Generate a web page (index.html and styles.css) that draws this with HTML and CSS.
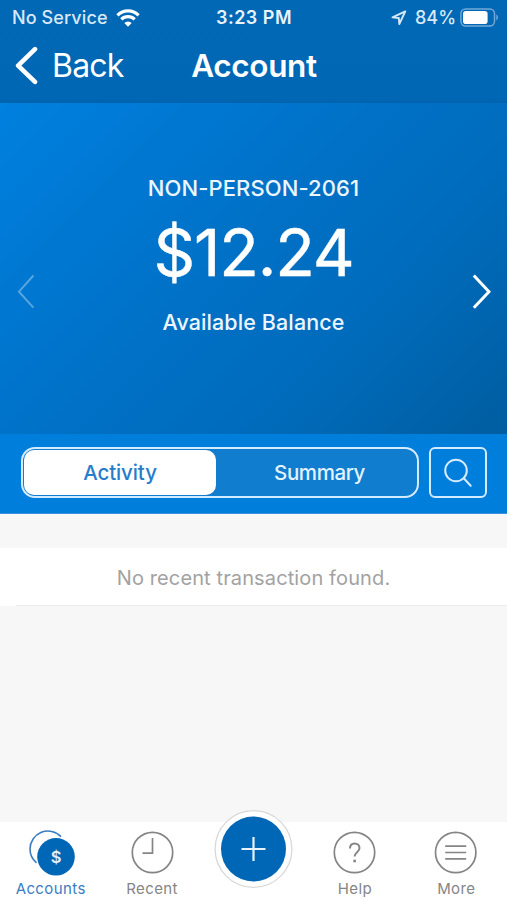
FILE: index.html
```html
<!DOCTYPE html>
<html lang="en">
<head>
<meta charset="utf-8">
<title>Account</title>
<link rel="stylesheet" href="styles.css">
</head>
<body>
<div class="app">
  <header class="top">
    <div class="status">
      <div class="status-left">
        <span class="carrier">No Service</span>
        <svg class="wifi" width="24" height="18" viewBox="0 0 24 18" fill="none" stroke="#fff" stroke-width="3.1"><path d="M1.4 6.3a15 15 0 0 1 21.2 0"/><path d="M5.3 10.4a9.5 9.5 0 0 1 13.4 0"/><path d="M12 17.7 8.3 14a5.2 5.2 0 0 1 7.4 0z" fill="#fff" stroke="none"/></svg>
      </div>
      <span class="time">3:23 PM</span>
      <div class="status-right">
        <svg class="locate" width="16" height="16" viewBox="0 0 16 16" fill="none" stroke="#d9e8f6" stroke-width="1.9" stroke-linejoin="round"><path d="M14.3 1.4 1.5 7.4l6.3.6.5 6z"/></svg>
        <span class="percent">84%</span>
        <svg class="battery" width="39" height="19" viewBox="0 0 39 19"><rect x=".9" y=".9" width="33.6" height="17.2" rx="4.8" fill="none" stroke="#73a9d7" stroke-width="1.5"/><rect x="3" y="3" width="24.6" height="13" rx="2.8" fill="#fff"/><path d="M36.3 6.6c2.2.8 2.2 5 0 5.8z" fill="#73a9d7"/></svg>
      </div>
    </div>
    <div class="nav">
      <div class="back">
        <svg width="26" height="40" viewBox="0 0 26 40" fill="none" stroke="#fff" stroke-width="4.6" stroke-linecap="round" stroke-linejoin="round"><path d="M22 4.2 5.1 20.6 22 36.8"/></svg>
        <span class="back-label">Back</span>
      </div>
      <h1 class="title">Account</h1>
    </div>
  </header>
  <section class="hero">
    <svg class="prev" width="20" height="38" viewBox="0 0 20 38" fill="none" stroke="#fff" stroke-width="2"><path d="M17.4 2.5 3 18.7l14.4 16"/></svg>
    <div class="balance">
      <div class="name">NON-PERSON-2061</div>
      <div class="amount">$12.24</div>
      <div class="caption">Available Balance</div>
    </div>
    <svg class="next" width="20" height="38" viewBox="0 0 20 38" fill="none" stroke="#fff" stroke-width="3"><path d="M2.8 2.5 18 18.7 2.8 34.8"/></svg>
  </section>
  <section class="controls">
    <div class="segments">
      <div class="segment active">Activity</div>
      <div class="segment summary">Summary</div>
    </div>
    <div class="search">
      <svg width="32" height="32" viewBox="0 0 32 32" fill="none" stroke="#d7ebff" stroke-width="2" stroke-linecap="round"><circle cx="14" cy="13.5" r="10.8"/><path d="m22 21.5 6.7 7.2"/></svg>
    </div>
  </section>
  <main class="content">
    <div class="empty"><span>No recent transaction found.</span></div>
  </main>
  <footer class="tabs">
    <div class="tab selected">
      <svg width="50" height="48" viewBox="0 0 50 48"><path d="M10.5 34.8A18 18 0 0 1 4 21 18 18 0 0 1 35 8.6" fill="none" stroke="#3a7dc2" stroke-width="1.6"/><circle cx="30" cy="28.8" r="18.8" fill="#0067b6"/><text class="coin" x="30" y="34.8" text-anchor="middle">$</text></svg>
      <span>Accounts</span>
    </div>
    <div class="tab">
      <svg width="44" height="48" viewBox="0 0 44 48" fill="none" stroke="#858585" stroke-width="1.7"><circle cx="22.5" cy="24.5" r="20.2"/><path d="M22.5 10v15.2h-10"/></svg>
      <span>Recent</span>
    </div>
    <div class="tab add">
      <svg width="80" height="80" viewBox="0 0 80 80"><circle cx="40.5" cy="40" r="38.4" fill="#fff" stroke="#d8d8d8" stroke-width="1.3"/><circle cx="40.5" cy="40" r="32.5" fill="#0067b6"/><path d="M40.5 28v24M28.5 40h24" stroke="#e8f2fa" stroke-width="2.2"/></svg>
    </div>
    <div class="tab">
      <svg width="44" height="48" viewBox="0 0 44 48" fill="none" stroke="#858585" stroke-width="1.7"><circle cx="21.5" cy="24.5" r="20.2"/><path d="M17 20.4c0-3.1 2-5 4.7-5s4.8 1.9 4.8 4.6c0 4.2-4.9 4.2-4.9 8.6" stroke-width="2"/><path d="M20.3 33h2.6" stroke-width="2.6"/></svg>
      <span>Help</span>
    </div>
    <div class="tab">
      <svg width="44" height="48" viewBox="0 0 44 48" fill="none" stroke="#858585" stroke-width="1.7"><circle cx="21.7" cy="24.5" r="20.2"/><path d="M11.2 18.2h21M11.2 24.5h21M11.2 30.8h21"/></svg>
      <span>More</span>
    </div>
  </footer>
</div>
</body>
</html>
```

FILE: styles.css
```css
* { box-sizing: border-box; }
body { margin: 0; font-family: Inter, "Liberation Sans", sans-serif; }
svg { display: block; flex: none; }
.app { width: 507px; height: 900px; display: flex; flex-direction: column; overflow: hidden; background: #f7f7f7; white-space: nowrap; }
.top { height: 103px; flex: none; background: linear-gradient(#0068b5, #0067b4 96%, #0062ad); color: #fff; }
.status { height: 34px; display: grid; grid-template-columns: 1fr auto 1fr; align-items: center; padding: 1px 8px 0 9px; font-size: 18px; }
.status-left, .status-right { display: flex; align-items: center; }
.status-left { padding-left: 3px; }
.status-right { justify-content: flex-end; }
.carrier, .percent { color: #d9e8f6; font-weight: 500; }
.carrier { width: 104px; letter-spacing: .1px; }
.time { font-weight: 600; color: #e9f3fb; letter-spacing: .5px; }
.locate { margin-right: 8px; }
.percent { width: 45px; }
.nav { height: 62px; display: grid; grid-template-columns: 1fr auto 1fr; align-items: center; padding: 0 12px 0 13px; }
.back { display: flex; align-items: center; gap: 13px; }
.back-label { font-size: 32px; letter-spacing: -.8px; }
.title { margin: 0; font-size: 31.5px; font-weight: 600; letter-spacing: -.35px; }
.hero { height: 331px; flex: none; display: flex; justify-content: space-between; padding: 0 16px; background: linear-gradient(135deg, #0080df 0%, #0072c8 42%, #006bbb 70%, #005da0 100%); color: #fff; }
.prev, .next { margin-top: 170px; }
.prev { opacity: .34; }
.balance { display: flex; flex-direction: column; align-items: center; padding-top: 70px; }
.name { font-size: 22px; line-height: 30px; font-weight: 500; color: #edf6ff; letter-spacing: .1px; }
.amount { font-size: 65px; line-height: 80px; margin-top: 10px; letter-spacing: -1.2px; -webkit-text-stroke: .4px #fff; }
.caption { font-size: 21.5px; line-height: 30px; margin-top: 14px; font-weight: 500; color: #edf6ff; letter-spacing: .1px; }
.controls { height: 80px; flex: none; display: flex; gap: 10px; padding: 13px 20px 0 21px; background: #007edc; border-bottom: 1px solid #3d91dc; }
.segments { width: 398px; height: 51px; border: 2px solid #d4eaff; border-radius: 14px; background: #107dcf; display: flex; padding: 1px; }
.segment { flex: 1; display: flex; align-items: center; justify-content: center; font-size: 20.5px; font-weight: 500; color: #e3f2ff; }
.segment.active { flex: 0 0 192px; background: #fff; color: #287ccc; border-radius: 10px; letter-spacing: -.1px; }
.segment.summary { padding-left: 7px; letter-spacing: -.4px; }
.search { width: 58px; height: 51px; border: 2px solid #d4eaff; border-radius: 6px; display: flex; align-items: center; justify-content: center; }
.content { flex: 1; padding-top: 34px; }
.empty { height: 58px; background: linear-gradient(#ececec, #ececec) 16px 100% / 100% 1px no-repeat #fff; display: flex; align-items: center; justify-content: center; font-size: 20px; color: #a2a2a2; padding-top: 2px; letter-spacing: .12px; }
.tabs { height: 78px; flex: none; background: #fff; display: grid; grid-template-columns: repeat(5, 1fr); }
.tab { display: flex; flex-direction: column; align-items: center; padding-top: 6px; font-size: 15px; color: #858585; }
.tab span { line-height: 20px; margin-top: 3px; letter-spacing: .4px; }
.tab.selected { color: #3a7dc2; }
.tab.add { padding: 0; margin-top: -13px; }
.coin { font-size: 16.5px; font-weight: 600; fill: #e4effa; }
```
